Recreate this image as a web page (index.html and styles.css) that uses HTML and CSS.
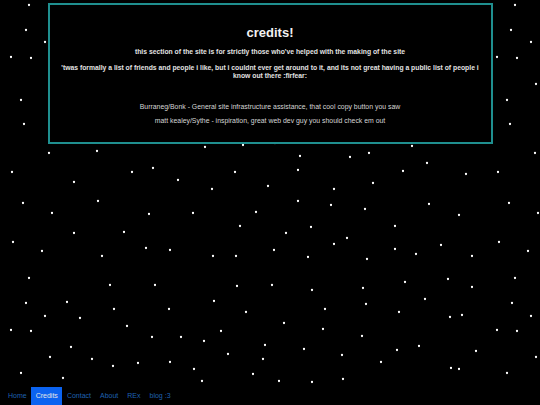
FILE: index.html
```html
<!DOCTYPE html>
<html lang="en">
<head>
<meta charset="utf-8">
<title>credits!</title>
<link rel="stylesheet" href="styles.css">
</head>
<body>
<svg class="stars" width="540" height="405" viewBox="0 0 540 405" aria-hidden="true">
<path d="M29 5h0M26 30h0M45 42h0M11 57h0M31 58h0M21 100h0M24 124h0M49 153h0M97 151h0M12 172h0M74 182h0M132 172h0M153 168h0M178 180h0M205 147h0M243 145h0M235 172h0M212 189h0M268 186h0M515 5h0M511 30h0M531 42h0M497 57h0M517 58h0M536 84h0M507 100h0M510 124h0M535 153h0M275 143h0M412 146h0M300 156h0M350 157h0M369 153h0M427 163h0M298 170h0M403 171h0M466 174h0M498 172h0M373 183h0M334 189h0M23 203h0M98 201h0M52 213h0M149 214h0M193 213h0M256 212h0M240 226h0M74 233h0M124 232h0M13 242h0M42 251h0M146 248h0M170 250h0M102 256h0M213 256h0M236 256h0M29 278h0M110 285h0M155 285h0M237 286h0M26 303h0M67 302h0M214 301h0M114 309h0M169 309h0M45 316h0M80 318h0M246 312h0M127 326h0M11 330h0M31 331h0M221 331h0M152 337h0M181 337h0M204 341h0M265 345h0M71 347h0M228 354h0M50 357h0M92 359h0M263 359h0M113 366h0M138 363h0M170 362h0M194 369h0M21 373h0M63 378h0M253 374h0M202 381h0M298 201h0M331 205h0M365 209h0M429 204h0M509 203h0M459 215h0M538 213h0M311 227h0M286 233h0M395 226h0M347 238h0M334 244h0M441 245h0M499 242h0M274 250h0M395 249h0M416 254h0M528 251h0M308 257h0M367 259h0M472 256h0M405 282h0M448 279h0M515 278h0M272 285h0M312 290h0M363 288h0M472 287h0M425 299h0M325 309h0M366 304h0M512 303h0M399 312h0M450 317h0M462 315h0M531 316h0M284 323h0M323 329h0M497 330h0M517 331h0M362 336h0M419 346h0M304 349h0M397 350h0M476 351h0M342 355h0M536 357h0M381 362h0M451 368h0M459 369h0M507 373h0M279 381h0M312 382h0M343 379h0" />
</svg>
<main class="panel">
  <h1 class="title">credits!</h1>
  <p class="lead">this section of the site is for strictly those who've helped with the making of the site</p>
  <p class="lead">'twas formally a list of friends and people i like, but i couldnt ever get around to it, and its not great having a public list of people i know out there :firfear:</p>
  <div class="credits">
    <p>Burraneg/Bonk - General site infrastructure assistance, that cool copy button you saw</p>
    <p>matt kealey/Sythe - inspiration, great web dev guy you should check em out</p>
  </div>
</main>
<nav class="nav">
  <a class="nav-link" href="#">Home</a>
  <a class="nav-link active" href="#">Credits</a>
  <a class="nav-link" href="#">Contact</a>
  <a class="nav-link" href="#">About</a>
  <a class="nav-link" href="#">REx</a>
  <a class="nav-link" href="#">blog :3</a>
</nav>
</body>
</html>
```
FILE: styles.css
```css
html, body {
  margin: 0;
  padding: 0;
  background: #000;
}

body {
  position: relative;
  width: 540px;
  height: 405px;
  overflow: hidden;
  display: flex;
  flex-direction: column;
  font-family: "Liberation Sans", Arial, sans-serif;
}

.stars {
  position: absolute;
  left: 0;
  top: 0;
  z-index: 0;
}

.stars path {
  fill: none;
  stroke: #fff;
  stroke-width: 2.3;
  stroke-linecap: round;
}

.panel {
  position: relative;
  z-index: 1;
  box-sizing: border-box;
  width: 445px;
  margin: 3px auto 0;
  padding: 0 10px 17px;
  background: #000;
  border: 2px solid #1f8f8f;
  text-align: center;
}

.title {
  margin: 19.5px 0 0;
  font-size: 13px;
  line-height: 15px;
  font-weight: bold;
  color: #f2f2f2;
}

.lead {
  margin: 8.7px 0 0;
  font-size: 6.8px;
  line-height: 7.5px;
  font-weight: bold;
  color: #e2e2e2;
}

.credits {
  margin-top: 24px;
}

.credits p {
  margin: 6.5px 0 0;
  font-size: 6.9px;
  line-height: 7.5px;
  color: #d6d6d6;
}

.credits p:first-child {
  margin-top: 0;
}

.nav {
  position: relative;
  z-index: 1;
  margin-top: auto;
  display: flex;
  padding-left: 3.5px;
  height: 18px;
}

.nav-link {
  padding: 0 4.5px;
  font-size: 7px;
  line-height: 18px;
  color: #1f62b0;
  text-decoration: none;
}

.nav-link.active {
  background: #0b63f0;
  color: #e6e6e6;
}
```
